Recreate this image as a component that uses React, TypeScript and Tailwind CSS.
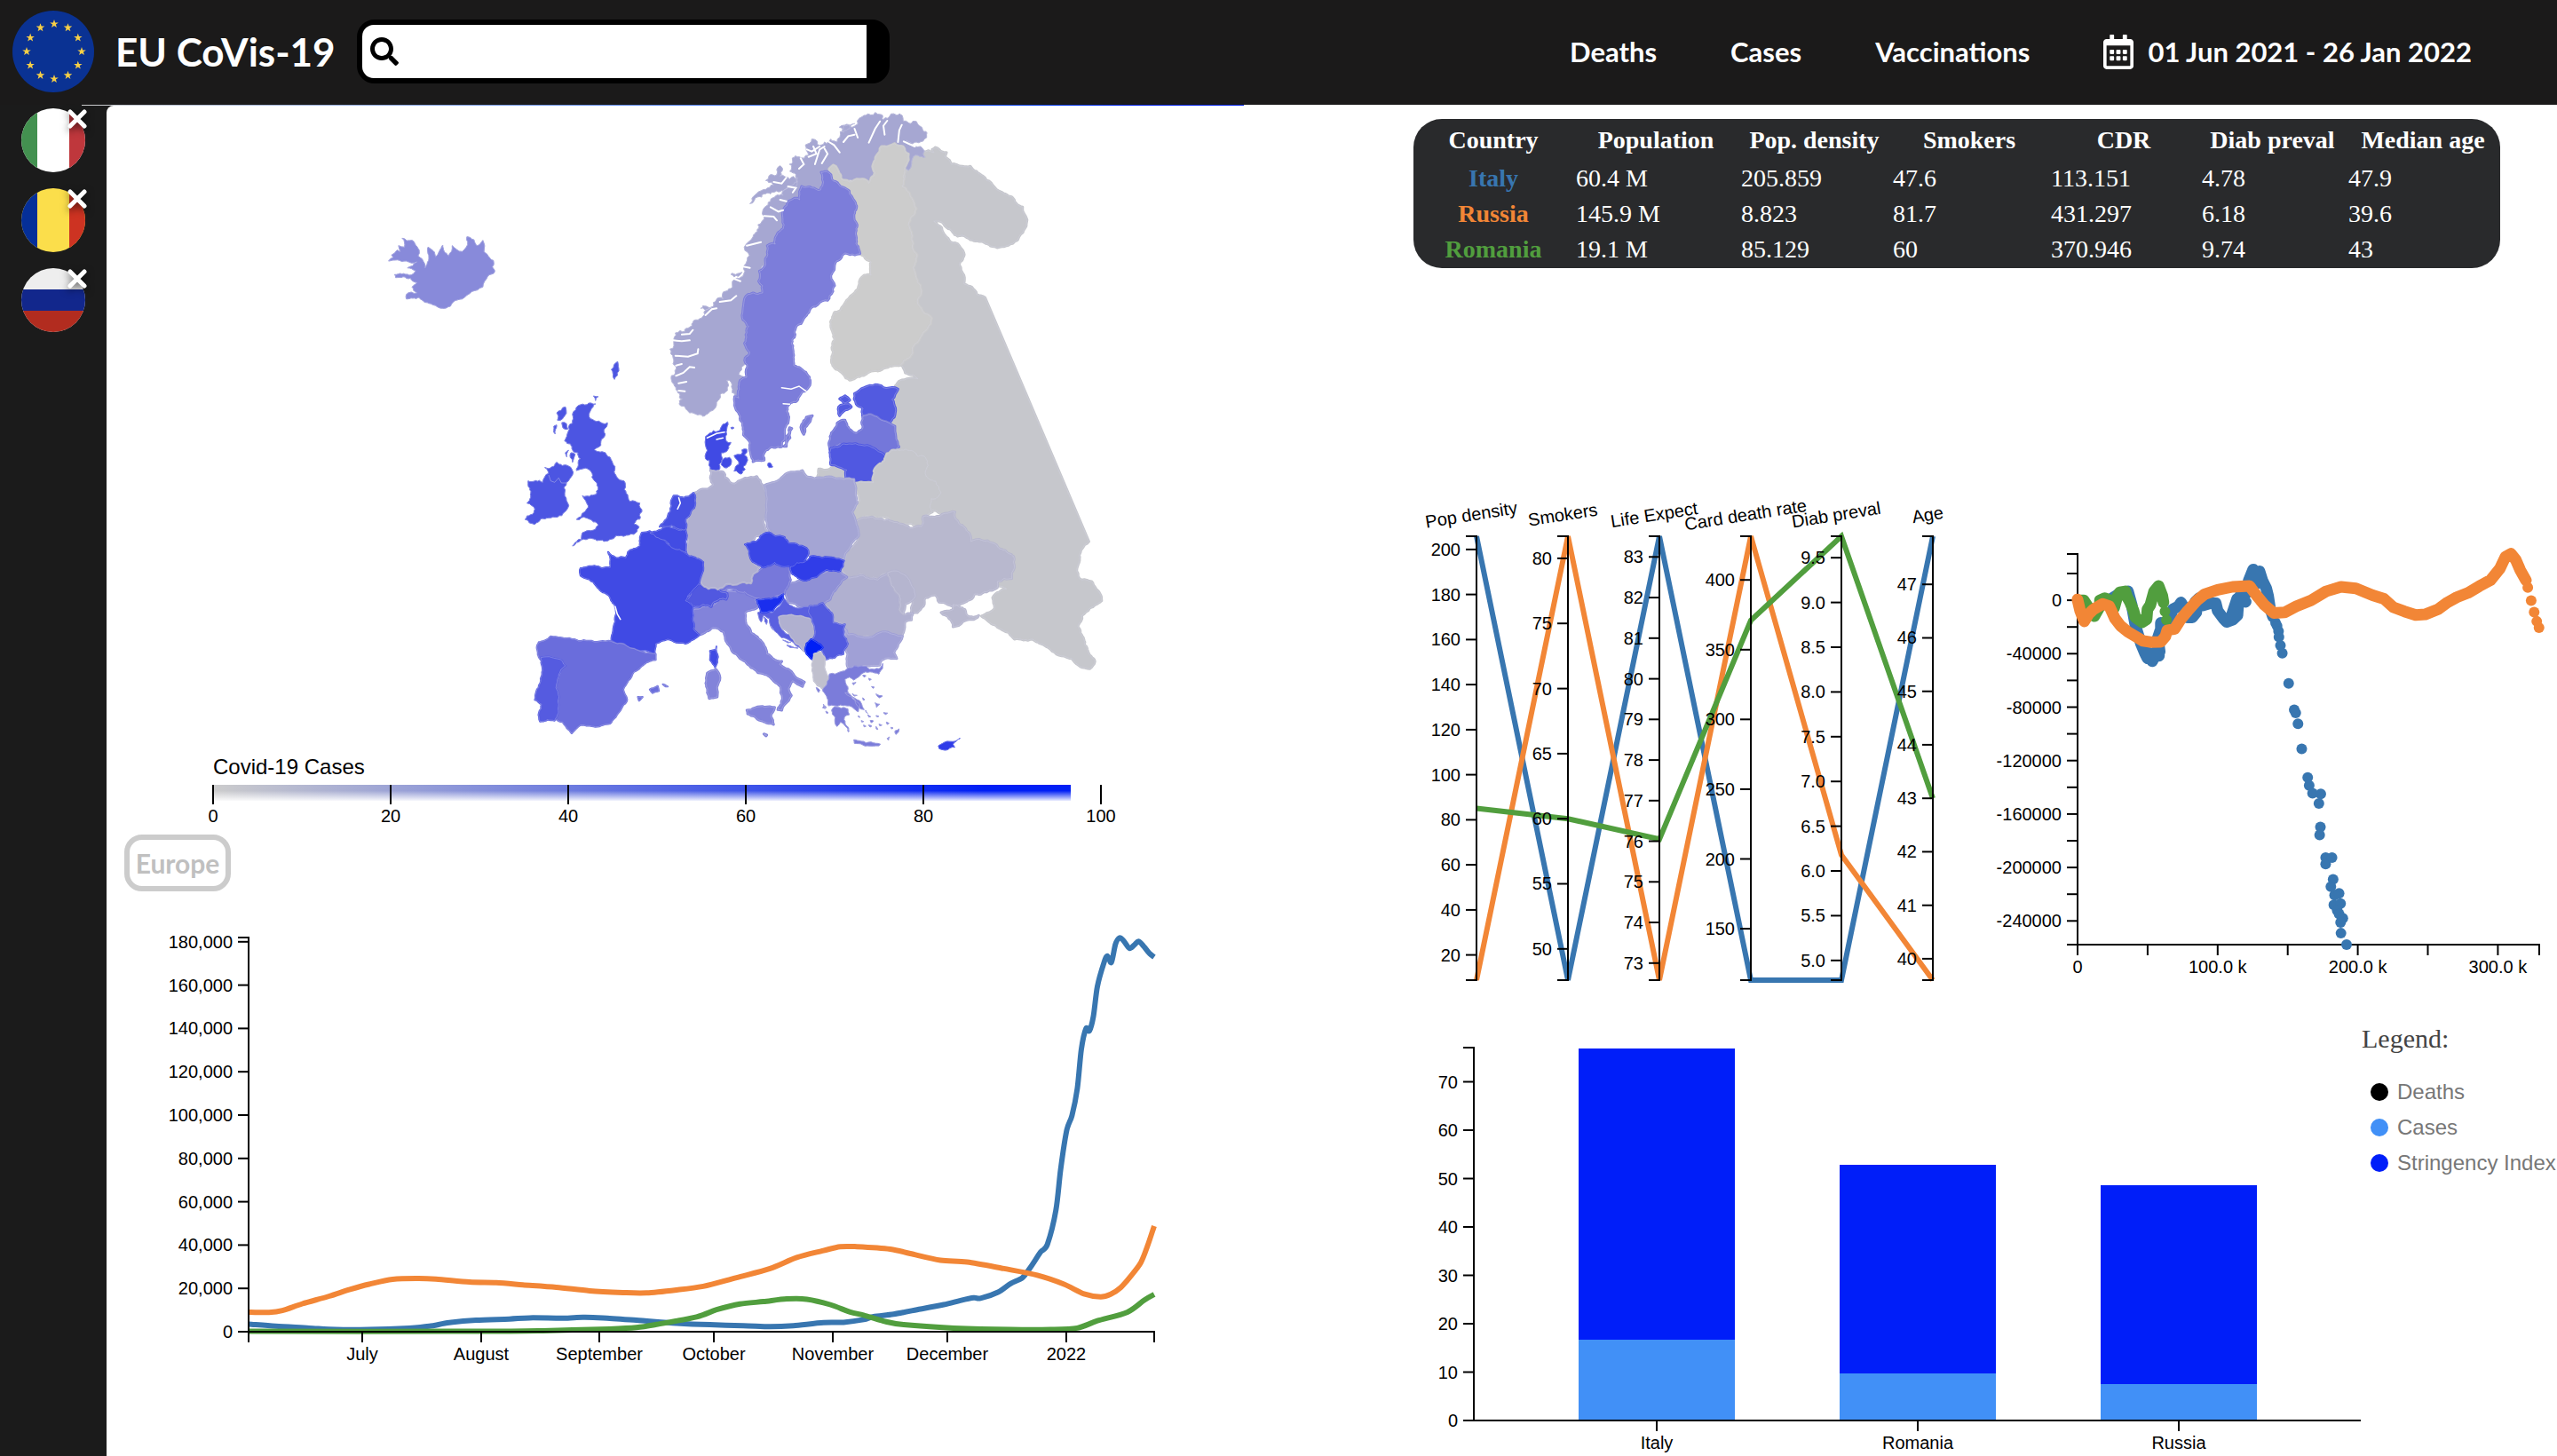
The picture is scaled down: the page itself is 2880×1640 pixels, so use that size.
import { FaRegCalendarAlt, FaSearch } from "react-icons/fa";

type Pt = [number, number];

const BLUE = "#3876b0";
const ORANGE = "#f28636";
const GREEN = "#519e3e";

/* ---------- geometry helpers ---------- */

function frame(ox: number, oy: number, kx: number, ky: number) {
  return (s: string): Pt[] =>
    s
      .trim()
      .split(/\s+/)
      .map((p) => {
        const [x, y] = p.split(",").map(Number);
        return [ox + x / kx, oy + y / ky] as Pt;
      });
}

const north = frame(700, 110, 2.8, 3);
const south = frame(560, 400, 2.24, 3);
const balkans = frame(800, 640, 3, 3);
const iceland = frame(0, 0, 1.508, 3);
const trend = frame(160, 1030, 1.329, 2.958);
const scatter = frame(2220, 590, 2.376, 2.958);

const f = (n: number) => n.toFixed(1);

function hash(a: number, b: number) {
  const v = Math.sin(a * 12.9898 + b * 78.233) * 43758.5453;
  return v - Math.floor(v) - 0.5;
}

/* Breaks an edge into small bumps so that a coast does not look ruled. */
function rough(a: Pt, b: Pt, k: number, out: Pt[]) {
  const flip = a[0] > b[0] || (a[0] === b[0] && a[1] > b[1]);
  const [p, q] = flip ? [b, a] : [a, b];
  const len = Math.hypot(q[0] - p[0], q[1] - p[1]);
  if (len < 3.5 || len > 120) {
    out.push(b);
    return;
  }
  const n = hash(p[0] + q[1], p[1] + q[0]) * k;
  const m: Pt = [(p[0] + q[0]) / 2 - (q[1] - p[1]) * n, (p[1] + q[1]) / 2 + (q[0] - p[0]) * n];
  rough(a, m, k, out);
  rough(m, b, k, out);
}

function area(pts: Pt[], k = 0.28) {
  const out: Pt[] = [pts[0]];
  pts.forEach((p, i) => rough(p, pts[(i + 1) % pts.length], k, out));
  return "M" + out.map(([x, y]) => `${f(x)} ${f(y)}`).join("L") + "Z";
}

function line(pts: Pt[]) {
  return "M" + pts.map(([x, y]) => `${f(x)} ${f(y)}`).join("L");
}

function curve(pts: Pt[]) {
  let d = `M${f(pts[0][0])} ${f(pts[0][1])}`;
  for (let i = 0; i < pts.length - 1; i++) {
    const a = pts[Math.max(0, i - 1)];
    const b = pts[i];
    const c = pts[i + 1];
    const e = pts[Math.min(pts.length - 1, i + 2)];
    d += `C${f(b[0] + (c[0] - a[0]) / 7)} ${f(b[1] + (c[1] - a[1]) / 7)} ${f(c[0] - (e[0] - b[0]) / 7)} ${f(c[1] - (e[1] - b[1]) / 7)} ${f(c[0])} ${f(c[1])}`;
  }
  return d;
}

/* ---------- map ---------- */

/* `seam` widens inland shapes so that neighbours meet without a gap. */
const regions: { fill: string; shapes: Pt[][]; k?: number; seam?: number }[] = [
  {
    fill: "#c6c7cc",
    k: 0.25,
    shapes: [
      [
        ...north(
          "950,182 985,185 980,175 990,168 1025,185 1020,200 1035,212 1040,225 1075,232 1100,232 1140,265 1190,315 1230,335 1265,370 1278,420 1270,445 1250,480 1215,500 1185,507 1145,490 1100,480 1075,465 1060,468 1045,455 1025,438 1005,418 985,418 1010,440 1020,465 1038,488 1065,500 1080,525 1065,565 1080,600 1080,630 1105,640 1120,665 1147,676",
        ),
        ...south(
          "1493,630 1475,655 1468,700 1462,730 1475,760 1500,765 1520,805 1525,830 1495,855 1475,880 1465,915 1480,960 1490,1000 1508,1035 1495,1060 1475,1055 1450,1025 1400,1000 1380,980 1350,960 1305,960 1270,925 1240,900 1222,882 1255,855 1250,820 1285,790 1240,760 1200,660 1150,560 1080,510 1000,440 985,330 985,230",
        ),
        ...north("860,985 870,965 900,950 935,950 920,937 895,930 885,905 875,905 900,840 900,650 885,400 895,265 905,210 925,185"),
      ],
      north("622,1255 650,1258 665,1245 700,1250 712,1258 708,1288 620,1287"),
    ],
  },
  {
    fill: "#a6a7d2",
    k: 0.6,
    seam: 1,
    shapes: [
      north(
        "370,1015 357,1005 350,985 340,955 332,955 334,990 300,1030 280,1060 240,1072 215,1065 182,1035 183,1000 172,980 170,930 163,880 165,820 170,795 200,790 225,760 260,725 290,705 320,680 350,640 365,610 385,575 395,520 390,500 415,470 430,430 450,400 470,350 510,330 530,300 555,285 550,260 530,225 560,200 590,195 580,160 600,140 640,150 660,140 680,150 690,115 720,95 745,90 770,60 800,50 825,75 840,70 850,55 885,60 905,85 940,95 962,125 955,140 930,150 890,148 925,165 955,180 958,200 935,195 915,215 905,245 893,245 890,215 860,180 820,180 810,255 780,300 740,290 697,290 670,250 640,300 600,330 568,340 530,400 500,450 490,510 470,640 420,700 410,880 395,1000",
      ),
      north("405,358 415,335 440,315 455,310 480,295 475,285 455,280 465,265 490,260 500,230 508,240 500,265 530,275 555,270 550,300 510,315 470,325 430,335"),
      north("687,100 715,92 735,88 720,105 700,118"),
      north("250,712 268,705 285,708 270,716"),
      north("345,597 365,595 380,590 368,604"),
    ],
  },
  {
    fill: "#cccccc",
    k: 0.3,
    shapes: [
      north(
        "862,155 905,190 905,210 893,245 888,265 885,300 915,340 930,375 905,430 915,480 932,530 920,575 930,610 945,660 933,688 978,745 965,780 920,840 875,905 820,920 770,935 720,955 700,935 670,910 665,870 672,820 660,770 672,725 690,720 710,685 735,660 765,600 787,600 787,555 765,535 752,527 720,480 715,400 718,340 680,310 655,262 655,240 668,228 680,240 697,278 725,285 760,275 780,290 800,255 805,195 820,165 840,165",
      ),
    ],
  },
  {
    fill: "#7c7dda",
    k: 0.35,
    shapes: [
      north(
        "640,250 655,255 690,300 718,315 735,350 733,395 743,430 740,480 752,527 720,530 705,525 690,545 672,565 660,605 672,635 655,670 650,685 605,705 575,745 550,775 545,810 540,850 543,905 565,915 585,935 595,955 585,985 560,1010 530,1035 520,1060 525,1100 515,1150 505,1180 465,1185 450,1200 450,1225 415,1230 405,1180 385,1140 375,1090 360,1050 357,1010 370,1015 375,955 395,945 398,910 390,880 405,860 388,830 383,720 388,680 415,660 445,660 445,635 433,620 455,560 460,500 485,495 487,470 513,430 508,395 525,355 545,340 562,345 568,300 600,305 628,312 637,285 630,252",
      ),
      north("583,1080 602,1075 590,1100 575,1138 568,1105"),
      north("530,1115 537,1118 520,1178 513,1178"),
    ],
  },
  {
    fill: "#888ada",
    k: 0.3,
    seam: 1,
    shapes: [
      iceland(
        "660,882 668,870 665,862 675,845 680,850 677,830 687,835 683,805 700,812 705,825 712,845 710,865 717,875 722,905 728,880 727,835 740,868 752,828 762,865 768,830 785,850 792,835 793,800 805,810 810,830 820,812 822,850 838,880 840,920 828,935 820,970 785,1010 770,1020 765,1035 752,1042 735,1030 712,1005 690,1010 690,995 708,990 700,970 708,955 697,940 672,938 670,928 695,930 706,915 692,905 708,885 690,882 675,878",
      ),
    ],
  },
  {
    fill: "#404ae4",
    k: 0.5,
    seam: 1,
    shapes: [
      north("265,1145 290,1125 310,1125 335,1095 330,1130 330,1160 345,1165 335,1190 315,1200 310,1255 280,1258 277,1225 265,1220"),
      north("315,1225 340,1215 345,1240 325,1250"),
      north("355,1210 378,1205 380,1190 395,1188 398,1225 385,1245 390,1255 378,1272 355,1262 370,1240"),
      north("462,1235 477,1248 465,1250"),
      north("345,1115 355,1116 348,1120"),
    ],
  },
  {
    fill: "#525ae0",
    shapes: [
      north("735,1000 765,980 800,970 872,985 853,1020 860,1080 845,1100 820,1090 785,1070 760,1075 762,1050 740,1035"),
      north("688,1018 705,1007 720,1022 705,1032"),
      north("685,1045 715,1035 725,1045 700,1060 688,1075"),
    ],
  },
  {
    fill: "#7477da",
    k: 0.25,
    shapes: [north("657,1190 658,1145 680,1100 705,1090 725,1125 740,1135 760,1120 762,1075 785,1070 820,1090 845,1100 862,1110 865,1145 875,1180 830,1210 775,1175 700,1170")],
  },
  { fill: "#5058e1", k: 0.25, shapes: [north("660,1185 700,1170 775,1175 830,1210 830,1235 800,1265 800,1295 740,1310 732,1290 708,1285 710,1258 660,1240")] },
  {
    fill: "#c6c7cc",
    k: 0.4,
    shapes: [south("900,440 950,430 955,380 980,345 1010,320 1050,325 1080,345 1080,400 1120,465 1095,485 1098,530 1075,545 1070,580 1030,570 960,550 905,565 895,530 908,510")],
  },
  {
    fill: "#b8b8ce",
    k: 0.3,
    shapes: [
      south(
        "905,565 930,550 990,560 1015,570 1070,580 1075,545 1130,535 1155,530 1165,570 1190,600 1195,630 1250,635 1303,680 1298,755 1262,765 1262,785 1235,800 1180,835 1160,845 1115,835 1105,810 1080,820 1060,870 1040,880 1050,830 1025,760 990,735 960,755 880,750 868,725 880,670 910,625",
      ),
      south("1150,842 1180,860 1185,880 1215,880 1175,900 1150,918 1140,890 1120,870 1150,860"),
    ],
  },
  {
    fill: "#b0b0d0",
    k: 0.22,
    shapes: [
      south("880,750 960,760 985,740 1010,790 1015,860 1025,878 1048,872 1045,895 1030,900 1022,950 980,935 950,950 885,945 875,910 850,900 845,870 825,840 840,825 860,780"),
    ],
  },
  { fill: "#b5b5cf", k: 0.25, shapes: [south("985,735 1010,730 1040,760 1055,815 1030,840 1025,875 1015,860 1015,810")] },
  { fill: "#a0a0d6", k: 0.2, shapes: [south("875,920 885,945 950,950 980,935 1022,950 1010,985 1000,1005 1008,1025 970,1030 965,1048 940,1050 885,1055 885,1010 875,990")] },
  { fill: "#8f90d6", k: 0.2, shapes: [south("740,770 775,760 810,740 860,725 882,750 860,780 840,825 800,850 770,855 735,835 728,800")] },
  {
    fill: "#8283da",
    k: 0.22,
    shapes: [
      south(
        "495,860 520,850 545,845 580,800 615,800 650,820 660,850 625,870 628,910 660,960 680,1010 700,1030 718,1035 712,1045 750,1085 775,1105 770,1120 745,1100 735,1125 742,1150 725,1180 718,1200 708,1198 720,1160 715,1120 680,1080 640,1055 610,1020 585,980 572,935 545,920 510,945 495,925 495,890",
      ),
      south("630,1200 650,1192 700,1190 690,1220 697,1248 665,1235 632,1212"),
      south("530,1075 552,1062 562,1090 555,1155 535,1160 528,1120"),
      south("673,1280 680,1284 678,1287"),
    ],
  },
  {
    fill: "#5a60e0",
    k: 0.2,
    seam: 1,
    shapes: [
      balkans("248,100 262,118 300,135 335,132 345,178 330,170 230,165 240,205 300,262 318,282 270,245 240,235 210,205 200,170 180,160 172,182 160,150 210,150"),
      balkans("182,165 192,175 190,190 184,180"),
      balkans("205,195 215,208 210,206"),
      balkans("245,243 272,250 262,252"),
      balkans("258,260 296,270 270,268"),
    ],
  },
  { fill: "#b0b0d0", k: 0.25, seam: 2, shapes: [balkans("232,165 290,162 345,178 348,200 355,215 350,240 325,250 320,282 290,255 245,205")] },
  { fill: "#525ae0", k: 0.25, seam: 2, shapes: [balkans("335,128 380,118 415,165 415,185 455,190 450,225 465,255 450,290 390,308 380,285 378,268 345,240 355,215 345,180")] },
  { fill: "#001ff5", k: 0.25, seam: 2, shapes: [balkans("340,240 380,268 360,282 348,310 322,280 325,255")] },
  { fill: "#c0c0ce", k: 0.25, seam: 2, shapes: [balkans("350,290 370,282 388,305 388,345 402,370 380,408 350,380")] },
  {
    fill: "#7b7cda",
    k: 0.3,
    seam: 1,
    shapes: [
      balkans(
        "402,358 440,350 465,338 510,330 570,340 583,322 582,340 570,358 540,350 510,358 500,368 485,378 470,368 455,375 460,395 465,420 480,440 505,460 500,485 470,465 440,462 400,465 395,440 380,415 402,372",
      ),
      balkans("420,468 465,475 470,495 455,500 468,545 440,520 428,535 422,505 410,480"),
      balkans("455,420 490,440 520,478 500,468"),
      balkans("485,580 510,585 575,595 570,600 530,600 487,592"),
      balkans("358,403 370,412 366,420"),
      balkans("382,460 392,470 386,474"),
      balkans("390,483 399,488 394,491"),
      balkans("385,462 380,472 390,474"),
      balkans("480,388 492,386 484,394"),
      balkans("515,362 526,364 520,368"),
      balkans("535,372 544,376 538,379"),
      balkans("560,425 582,432 572,438"),
      balkans("557,455 572,460 562,470"),
      balkans("515,438 522,444 517,446"),
      balkans("480,424 496,430 486,432"),
      balkans("545,400 554,402 550,406"),
      balkans("585,488 600,490 592,494"),
      balkans("624,550 638,543 628,562"),
      balkans("598,575 606,570 602,582"),
      balkans("525,480 532,490 526,486"),
      balkans("532,495 542,502 536,503"),
      balkans("540,515 552,517 544,522"),
      balkans("510,515 518,518 512,520"),
      balkans("518,530 526,534 520,536"),
      balkans("560,498 570,500 564,503"),
      balkans("570,527 580,530 573,533"),
      balkans("535,530 546,533 540,537"),
      balkans("560,535 566,545 561,543"),
      balkans("595,520 604,524 598,528"),
      balkans("610,538 618,540 613,543"),
      balkans("464,545 470,550 466,553"),
      balkans("500,498 506,504 501,503"),
    ],
  },
  { fill: "#2f3ce8", seam: 1, shapes: [south("1113,1320 1135,1305 1150,1306 1168,1295 1150,1315 1155,1325 1130,1335 1115,1330")] },
  { fill: "#7778da", k: 0.25, shapes: [south("560,780 630,770 645,740 690,702 738,715 740,760 725,805 690,825 650,820 625,800 565,800")] },
  { fill: "#1a2eee", seam: 2, shapes: [south("655,828 690,825 722,808 715,835 695,865 665,868")] },
  { fill: "#5158e0", shapes: [south("475,830 500,775 555,768 560,795 580,805 578,825 545,835 540,850 520,842 500,850")] },
  {
    fill: "#b0b0d0",
    k: 0.35,
    shapes: [
      south(
        "538,390 570,395 575,415 600,435 635,415 655,410 670,440 680,500 690,605 625,640 640,690 662,715 640,770 600,775 515,768 520,700 485,690 480,650 475,600 480,560 500,500 500,465 535,450 545,440 538,415",
      ),
    ],
  },
  { fill: "#a4a5d4", k: 0.2, shapes: [south("675,440 700,430 725,405 770,390 780,410 800,418 900,420 908,500 895,530 905,565 912,610 880,665 875,690 850,685 785,675 755,635 725,640 690,605 680,500")] },
  { fill: "#3a46e6", seam: 2, shapes: [south("625,640 680,600 725,615 735,635 785,660 775,695 740,715 700,700 670,718 640,690")] },
  { fill: "#303de8", seam: 2, shapes: [south("740,715 775,700 790,680 850,685 875,695 865,730 830,725 805,750 775,762 745,740")] },
  {
    fill: "#404ae4",
    k: 0.2,
    seam: 2,
    shapes: [
      south(
        "365,600 385,595 440,650 485,680 520,700 510,770 475,830 495,850 493,890 495,925 510,945 475,975 430,960 400,975 398,1010 350,995 288,965 298,900 297,845 280,810 250,780 210,745 210,720 245,712 285,718 280,665 300,685 325,685 330,665 360,645",
      ),
      south("553,985 557,1020 550,1055 537,1030 537,1000 552,995"),
    ],
  },
  { fill: "#424ce3", seam: 2, shapes: [south("385,600 430,578 475,590 475,630 478,670 440,650 400,615")] },
  { fill: "#4650e2", seam: 2, shapes: [south("445,475 462,480 495,465 500,500 475,555 475,590 440,575 410,580 430,545 440,510")] },
  {
    fill: "#6a6ddc",
    k: 0.2,
    seam: 2,
    shapes: [
      south("105,970 135,950 230,965 288,967 350,995 400,1010 400,1030 345,1070 318,1130 328,1165 305,1210 285,1245 210,1250 188,1278 165,1240 148,1230 155,1180 150,1130 170,1045 110,1030 100,990"),
      south("385,1130 405,1118 408,1135 392,1142"),
      south("418,1112 430,1120 425,1120"),
      south("355,1155 367,1155 358,1168"),
    ],
  },
  { fill: "#555be0", k: 0.25, seam: 2, shapes: [south("110,1022 165,1035 172,1050 155,1080 150,1130 155,1180 145,1235 108,1238 112,1180 95,1165 108,1110")] },
  {
    fill: "#4c55e2",
    k: 0.4,
    seam: 1,
    shapes: [
      south("78,425 115,430 130,400 120,380 150,362 180,375 190,405 175,430 178,500 170,530 130,550 95,572 70,555 95,520 75,500 85,460 78,440"),
      south(
        "205,170 248,165 235,215 278,228 268,280 245,320 275,335 290,360 295,395 320,425 330,480 335,495 360,500 365,530 345,570 358,580 350,600 300,610 265,625 230,620 190,645 215,600 255,575 200,555 220,530 230,510 215,475 250,470 250,430 235,390 200,390 210,350 190,320 185,300 170,290 190,230 190,200",
      ),
      south("150,195 172,175 165,215 152,220"),
      south("163,228 175,232 178,250 166,246"),
      south("143,240 150,236 146,266"),
      south("186,330 197,335 190,362"),
      south("172,330 180,322 176,345"),
      south("243,138 255,140 248,154"),
      south("288,48 304,22 296,82"),
    ],
  },
];

const fjords: Pt[][] = [
  north("780,152 800,105 815,80"),
  north("830,125 826,95 838,78"),
  north("872,150 876,110 884,92"),
  north("890,148 925,165"),
  north("610,225 625,175 640,165"),
  north("590,200 615,190 605,165"),
  north("632,222 650,190 640,172"),
  north("688,185 670,160 655,150"),
  north("700,150 715,130 735,125"),
  north("745,135 735,105"),
  north("560,240 575,225 565,205"),
  north("525,300 550,305 540,320"),
  north("500,345 520,350"),
  north("470,370 495,385 510,380"),
  north("450,400 480,402 490,415"),
  north("395,500 440,488"),
  north("380,570 405,575"),
  north("350,610 375,620"),
  north("310,690 345,685 362,670"),
  north("265,735 285,715 300,712"),
  north("190,800 215,798 225,785"),
  north("163,820 190,823 215,820"),
  north("170,872 210,875 240,865 242,850"),
  north("172,905 190,900"),
  north("172,940 195,930 215,910 230,912"),
  north("180,965 205,960"),
  north("180,990 200,992"),
  north("585,175 600,182 625,165"),
  north("480,285 505,290 520,270"),
];

const inlets: Pt[][] = [north("505,980 535,985 560,975 582,992"), north("510,1034 530,1036"), north("270,1150 300,1135 325,1130"), north("300,1155 320,1150"), south("298,850 303,875 311,893"), south("455,520 462,500 458,482")];

function EuropeMap() {
  return (
    <svg viewBox="120 119 1440 821" className="block h-auto w-full" role="img" aria-label="Covid-19 cases in Europe">
      <defs>
        <linearGradient id="scale">
          <stop offset="0" stopColor="#cccccc" />
          <stop offset="0.9" stopColor="#001ff5" />
        </linearGradient>
        <linearGradient id="fade" x2="0" y2="1">
          <stop offset="0.35" stopColor="#fff" stopOpacity="0" />
          <stop offset="1" stopColor="#fff" />
        </linearGradient>
      </defs>
      <g strokeLinejoin="round">
        {regions.map((r, i) => {
          const d = r.shapes.map((s) => area(s, r.k)).join("");
          return (
            <g key={i}>
              <path fill={r.fill} stroke={r.fill} strokeWidth={r.seam ?? 3} d={d} />
              <path fill="none" stroke="#d8d8ea" strokeOpacity="0.3" d={d} />
            </g>
          );
        })}
        <path fill="none" stroke="#d8d8ea" strokeOpacity="0.4" d={line(south("130,405 135,425 145,430 155,415 162,432 175,432"))} />
      </g>
      <path fill="none" stroke="#fff" strokeWidth="2" strokeLinecap="round" d={fjords.map(line).join("")} />
      <path fill="none" stroke="#fff" strokeWidth="1.5" strokeLinecap="round" d={inlets.map(line).join("")} />
      <g className="font-['Liberation_Sans',sans-serif] text-[20px]" textAnchor="middle">
        <text x="240" y="872" textAnchor="start" className="text-[24px]">
          Covid-19 Cases
        </text>
        <rect x="240" y="884" width="966" height="18" fill="url(#scale)" />
        <rect x="240" y="884" width="966" height="19" fill="url(#fade)" />
        {[0, 20, 40, 60, 80, 100].map((v) => (
          <g key={v}>
            <path d={`M${240 + v * 10} 884v22`} stroke="#000" strokeWidth="2" />
            <text x={240 + v * 10} y="926">
              {v}
            </text>
          </g>
        ))}
      </g>
    </svg>
  );
}

/* ---------- trend lines ---------- */

const series = {
  blue: "160,1365 200,1372 250,1378 290,1383 340,1383 400,1378 430,1372 460,1360 500,1352 550,1348 580,1344 630,1345 660,1342 690,1344 740,1352 800,1362 850,1367 900,1370 940,1373 975,1370 1020,1360 1050,1359 1080,1350 1095,1340 1125,1332 1160,1317 1200,1300 1225,1286 1245,1277 1255,1279 1282,1258 1300,1230 1318,1210 1330,1175 1345,1125 1355,1100 1368,985 1375,850 1384,720 1392,670 1400,580 1406,450 1413,380 1418,388 1424,340 1430,240 1440,160 1445,138 1451,160 1457,100 1463,78 1469,87 1478,113 1486,100 1492,90 1500,108 1508,130 1515,142",
  orange:
    "160,1325 190,1326 210,1320 240,1297 280,1272 310,1250 340,1232 375,1216 410,1213 440,1215 490,1225 530,1227 570,1234 620,1242 670,1254 720,1260 755,1261 800,1251 840,1239 890,1210 940,1180 980,1143 1020,1120 1045,1107 1070,1107 1120,1115 1150,1130 1195,1152 1235,1158 1290,1180 1340,1202 1380,1232 1410,1264 1435,1274 1450,1265 1465,1243 1480,1205 1495,1160 1505,1105 1515,1038",
  green:
    "160,1389 500,1389 600,1387 700,1381 740,1376 770,1366 830,1341 860,1317 895,1298 930,1290 965,1281 995,1282 1030,1300 1060,1325 1080,1335 1110,1355 1140,1367 1215,1378 1300,1383 1360,1383 1400,1378 1430,1354 1475,1325 1500,1285 1515,1266",
};

const months: [string, number][] = [
  ["July", 408],
  ["August", 542],
  ["September", 675],
  ["October", 804],
  ["November", 938],
  ["December", 1067],
  ["2022", 1201],
];

function TrendChart() {
  return (
    <svg viewBox="120 1004 1440 636" className="block h-auto w-full font-['Liberation_Sans',sans-serif] text-[20px]" role="img" aria-label="Cases over time">
      <g fill="none" strokeWidth="6" strokeLinejoin="round">
        <path stroke={BLUE} d={curve(trend(series.blue))} />
        <path stroke={ORANGE} d={curve(trend(series.orange))} />
        <path stroke={GREEN} d={curve(trend(series.green))} />
      </g>
      <path fill="none" stroke="#000" strokeWidth="2" d="M268 1056H280V1500H268M280 1512V1500H1300V1512" />
      {Array.from({ length: 10 }, (_, i) => {
        const y = 1500 - i * 48.8;
        return (
          <g key={i}>
            <path d={`M268 ${y}h12`} stroke="#000" strokeWidth="2" />
            <text x="262" y={y + 7} textAnchor="end">
              {(i * 20000).toLocaleString("en-US")}
            </text>
          </g>
        );
      })}
      {months.map(([m, x]) => (
        <g key={m}>
          <path d={`M${x} 1500v12`} stroke="#000" strokeWidth="2" />
          <text x={x} y="1532" textAnchor="middle">
            {m}
          </text>
        </g>
      ))}
    </svg>
  );
}

/* ---------- parallel coordinates ---------- */

const axes = [
  { name: "Pop density", x: 1663, min: 8.823, max: 205.859, from: 20, to: 200, step: 20, digits: 0 },
  { name: "Smokers", x: 1766, min: 47.6, max: 81.7, from: 50, to: 80, step: 5, digits: 0 },
  { name: "Life Expect", x: 1869, min: 72.58, max: 83.51, from: 73, to: 83, step: 1, digits: 0 },
  { name: "Card death rate", x: 1972, min: 113.151, max: 431.297, from: 150, to: 400, step: 50, digits: 0 },
  { name: "Diab preval", x: 2074, min: 4.78, max: 9.74, from: 5, to: 9.5, step: 0.5, digits: 1 },
  { name: "Age", x: 2177, min: 39.6, max: 47.9, from: 40, to: 47, step: 1, digits: 0 },
];

const profiles = [
  { color: BLUE, values: [205.859, 47.6, 83.51, 113.151, 4.78, 47.9] },
  { color: ORANGE, values: [8.823, 81.7, 72.58, 431.297, 6.18, 39.6] },
  { color: GREEN, values: [85.129, 60, 76.05, 370.946, 9.74, 43] },
];

const py = (i: number, v: number) => 1104 - (500 * (v - axes[i].min)) / (axes[i].max - axes[i].min);

function ParallelChart() {
  return (
    <svg viewBox="1560 540 660 580" className="block h-auto w-full font-['Liberation_Sans',sans-serif] text-[20px]" role="img" aria-label="Country indicators">
      <g fill="none" strokeWidth="6">
        {profiles.map((p) => (
          <path key={p.color} stroke={p.color} d={line(p.values.map((v, i) => [axes[i].x, py(i, v)] as Pt))} />
        ))}
      </g>
      {axes.map((a, i) => {
        const count = Math.round((a.to - a.from) / a.step) + 1;
        return (
          <g key={a.name}>
            <path fill="none" stroke="#000" strokeWidth="2" d={`M${a.x - 12} 604h12v500h-12`} />
            {Array.from({ length: count }, (_, n) => {
              const v = a.from + n * a.step;
              const y = py(i, v);
              return (
                <g key={n}>
                  <path d={`M${a.x - 12} ${f(y)}h12`} stroke="#000" strokeWidth="2" />
                  <text x={a.x - 18} y={y + 7} textAnchor="end">
                    {v.toFixed(a.digits)}
                  </text>
                </g>
              );
            })}
            <text transform={`translate(${a.x} 604) rotate(-9)`} x="-2" y="-18" textAnchor="middle">
              {a.name}
            </text>
          </g>
        );
      })}
    </svg>
  );
}

/* ---------- scatter ---------- */

const trails = {
  blue: scatter(
    "375,250 395,235 420,225 430,270 440,340 455,400 465,430 472,448 478,430 485,458 492,440 503,440 500,410 505,425 500,380 508,350 508,330 515,345 530,320 540,285 555,275 562,262 575,290 580,312 592,312 603,295 600,260 610,248 620,272 640,265 655,265 660,290 675,315 684,327 700,320 713,305 715,270 705,285 695,315 712,250 735,260 720,240 745,225 743,190 755,152 762,200 770,195 772,158 780,190 790,215 795,240 800,280 808,310",
  ),
  green: scatter("290,255 302,255 315,280 330,308 345,275 345,255 358,248 372,255 383,280 392,240 398,228 413,225 418,245 425,260 435,290 440,312 458,328 470,318 472,285 480,270 490,225 502,207 512,240 515,262"),
  orange: scatter(
    "285,252 292,290 303,325 315,300 328,285 352,267 370,274 385,315 400,340 420,360 440,375 460,390 480,394 508,393 520,375 525,355 545,350 560,320 580,290 605,255 625,235 660,220 700,210 745,207 765,240 785,270 810,297 840,295 870,275 910,255 950,225 990,210 1030,215 1075,238 1105,250 1130,278 1160,292 1190,304 1215,302 1250,285 1275,262 1300,245 1330,230 1360,208 1390,188 1415,150 1430,110 1445,100 1458,120 1470,155 1485,188",
  ),
};

const dots = {
  blue: scatter(
    "815,330 819,340 823,358 824,377 828,405 833,431 850,532 865,620 869,630 875,666 885,750 901,845 905,872 914,898 936,900 931,932 935,1010 933,1037 949,1112 949,1134 966,1112 969,1185 963,1209 973,1237 985,1231 971,1270 989,1265 980,1288 985,1300 995,1314 989,1328 990,1364 1005,1402",
  ),
  green: scatter("519,292 523,320"),
  orange: scatter("1490,212 1499,256 1507,294 1514,325 1520,346"),
};

const layers: { color: string; trail: Pt[]; dots: Pt[] }[] = [
  { color: BLUE, trail: trails.blue, dots: dots.blue },
  { color: GREEN, trail: trails.green, dots: dots.green },
  { color: ORANGE, trail: trails.orange, dots: dots.orange },
];

function ScatterChart() {
  return (
    <svg viewBox="2220 540 660 580" className="block h-auto w-full font-['Liberation_Sans',sans-serif] text-[20px]" role="img" aria-label="Projection of cases">
      <path fill="none" stroke="#000" strokeWidth="2" d="M2328 624H2340V1064H2328M2340 1076V1064H2860V1076" />
      {Array.from({ length: 14 }, (_, i) => {
        const y = 646 + i * 30.1;
        return (
          <g key={i}>
            <path d={`M2328 ${f(y)}h12`} stroke="#000" strokeWidth="2" />
            {i % 2 === 1 && (
              <text x="2322" y={y + 7} textAnchor="end">
                {20000 - i * 20000}
              </text>
            )}
          </g>
        );
      })}
      {Array.from({ length: 7 }, (_, i) => {
        const x = 2340 + i * 78.9;
        return (
          <g key={i}>
            <path d={`M${f(x)} 1064v12`} stroke="#000" strokeWidth="2" />
            {i % 2 === 0 && (
              <text x={x} y="1096" textAnchor="middle">
                {i === 0 ? "0" : `${i * 50}.0 k`}
              </text>
            )}
          </g>
        );
      })}
      {layers.map((l) => (
        <g key={l.color}>
          <path fill="none" stroke={l.color} strokeWidth="13" strokeLinecap="round" strokeLinejoin="round" d={line(l.trail)} />
          {l.dots.map(([x, y], i) => (
            <circle key={i} cx={x} cy={y} r="6" fill={l.color} />
          ))}
        </g>
      ))}
    </svg>
  );
}

/* ---------- stacked bars ---------- */

const bars = [
  { name: "Italy", x: 1866, top: 1181, split: 1509 },
  { name: "Romania", x: 2160, top: 1312, split: 1547 },
  { name: "Russia", x: 2454, top: 1335, split: 1559 },
];

const legend = [
  { name: "Deaths", y: 1230, color: "#000000" },
  { name: "Cases", y: 1270, color: "#4190f7" },
  { name: "Stringency Index", y: 1310, color: "#001ef9" },
];

function BarChart() {
  return (
    <svg viewBox="1560 1120 1320 520" className="block h-auto w-full font-['Liberation_Sans',sans-serif] text-[20px]" role="img" aria-label="Stringency index by country">
      {bars.map((b) => (
        <g key={b.name}>
          <rect x={b.x - 88} y={b.top} width="176" height={b.split - b.top} fill="#001ef9" />
          <rect x={b.x - 88} y={b.split} width="176" height={1600 - b.split} fill="#4190f7" />
          <path d={`M${b.x} 1600v12`} stroke="#000" strokeWidth="2" />
          <text x={b.x} y="1632" textAnchor="middle">
            {b.name}
          </text>
        </g>
      ))}
      <path fill="none" stroke="#000" strokeWidth="2" d="M1648 1180H1660V1600H1648M1660 1600H2659" />
      {Array.from({ length: 8 }, (_, i) => {
        const y = 1600 - i * 54.5;
        return (
          <g key={i}>
            <path d={`M1648 ${y}h12`} stroke="#000" strokeWidth="2" />
            <text x="1642" y={y + 7} textAnchor="end">
              {i * 10}
            </text>
          </g>
        );
      })}
      <text x="2660" y="1180" fill="#444" className="font-['Liberation_Serif',serif] text-[30px]">
        Legend:
      </text>
      {legend.map((l) => (
        <g key={l.name}>
          <circle cx="2680" cy={l.y} r="10" fill={l.color} />
          <text x="2700" y={l.y + 8} fill="#777" className="text-[24px]">
            {l.name}
          </text>
        </g>
      ))}
    </svg>
  );
}

/* ---------- chrome ---------- */

function star(cx: number, cy: number, r: number) {
  return (
    "M" +
    Array.from({ length: 10 }, (_, i) => {
      const a = (Math.PI * i) / 5 - Math.PI / 2;
      const q = i % 2 ? r * 0.4 : r;
      return `${f(cx + q * Math.cos(a))} ${f(cy + q * Math.sin(a))}`;
    }).join("L") +
    "Z"
  );
}

function Logo() {
  return (
    <svg viewBox="0 0 92 92" className="size-[92px] shrink-0" role="img" aria-label="European Union">
      <circle cx="46" cy="46" r="46" fill="#0a3293" />
      {Array.from({ length: 12 }, (_, i) => (
        <path key={i} fill="#f7cf46" d={star(47 + 31 * Math.sin((i * Math.PI) / 6), 46 - 31 * Math.cos((i * Math.PI) / 6), 5)} />
      ))}
    </svg>
  );
}

function Flag({ name, bands }: { name: string; bands: React.ReactNode }) {
  return (
    <div className="relative size-[72px]">
      <svg viewBox="0 0 72 72" className="size-full rounded-full" role="img" aria-label={name}>
        {bands}
      </svg>
      <button type="button" aria-label={`Remove ${name}`} className="absolute top-px -right-0.5 size-[22px] cursor-pointer drop-shadow-[0_3px_4px_rgba(0,0,0,0.6)]">
        <svg viewBox="0 0 22 22" className="size-full" fill="none" stroke="#fff" strokeWidth="5" strokeLinecap="round">
          <path d="M3 3l16 16M19 3L3 19" />
        </svg>
      </button>
    </div>
  );
}

const columns = ["Country", "Population", "Pop. density", "Smokers", "CDR", "Diab preval", "Median age"];

const rows = [
  { name: "Italy", tone: "text-[#3876b0]", cells: ["60.4 M", "205.859", "47.6", "113.151", "4.78", "47.9"] },
  { name: "Russia", tone: "text-[#f28636]", cells: ["145.9 M", "8.823", "81.7", "431.297", "6.18", "39.6"] },
  { name: "Romania", tone: "text-[#519e3e]", cells: ["19.1 M", "85.129", "60", "370.946", "9.74", "43"] },
];

function StatsTable() {
  return (
    <div className="mt-[15px] mr-16 ml-8 overflow-hidden rounded-[32px] bg-[#292a2c] pb-px font-['Liberation_Serif',serif] text-[28px] leading-[40px] text-white">
      <table className="w-full table-fixed border-collapse">
        <colgroup>
          <col className="w-[180px]" />
          <col className="w-[186px]" />
          <col className="w-[171px]" />
          <col className="w-[178px]" />
          <col className="w-[170px]" />
          <col className="w-[165px]" />
          <col className="w-[174px]" />
        </colgroup>
        <thead>
          <tr className="h-[47px]">
            {columns.map((c) => (
              <th key={c} scope="col" className="p-0 text-center font-bold whitespace-nowrap">
                {c}
              </th>
            ))}
          </tr>
        </thead>
        <tbody>
          {rows.map((r) => (
            <tr key={r.name}>
              <th scope="row" className={`p-0 text-center font-bold ${r.tone}`}>
                {r.name}
              </th>
              {r.cells.map((c, i) => (
                <td key={i} className="p-0 pl-[3px]">
                  {c}
                </td>
              ))}
            </tr>
          ))}
        </tbody>
      </table>
    </div>
  );
}

export default function App() {
  return (
    <div className="min-h-screen bg-[#1b1b1b] font-['Lato',sans-serif]">
      <header className="flex h-[118px] items-start bg-[#1b1a1a] pr-24 pl-3.5 text-white">
        <div className="flex h-[116px] w-full items-center">
          <Logo />
          <h1 className="ml-6 w-[272px] shrink-0 text-[44px] leading-none font-bold whitespace-nowrap">EU CoVis-19</h1>
          <form className="flex h-[72px] w-[600px] shrink-0 items-stretch rounded-[20px] border-6 border-black bg-black" role="search">
            <label className="flex w-[568px] items-center rounded-l-[13px] bg-white pl-[9px] text-black">
              <FaSearch className="size-8 shrink-0" aria-hidden />
              <input type="search" aria-label="Search country" className="h-full min-w-0 flex-1 bg-transparent px-3 text-[30px] outline-none" />
            </label>
          </form>
          <nav className="ml-auto flex items-center gap-[83px] text-[31px] leading-none font-bold whitespace-nowrap">
            <a href="#deaths">Deaths</a>
            <a href="#cases">Cases</a>
            <a href="#vaccinations">Vaccinations</a>
            <button type="button" className="flex cursor-pointer items-center gap-4">
              <FaRegCalendarAlt className="h-[39px] w-[34px]" aria-hidden />
              01 Jun 2021 - 26 Jan 2022
            </button>
          </nav>
        </div>
      </header>
      <div className="flex h-px bg-white">
        <div className="w-[92px] shrink-0 bg-[#1b1b1b]" />
        <div className="w-5/11 bg-linear-to-r from-[#cccccc] to-[#001ff5] to-90%" />
      </div>
      <div className="flex">
        <aside className="flex w-[120px] shrink-0 flex-col items-center gap-[18px] pt-[3px]">
          <Flag
            name="Italy"
            bands={
              <>
                <rect width="72" height="72" fill="#fff" />
                <rect width="18" height="72" fill="#439150" />
                <rect x="54" width="18" height="72" fill="#bf373c" />
              </>
            }
          />
          <Flag
            name="Romania"
            bands={
              <>
                <rect width="72" height="72" fill="#fbde4b" />
                <rect width="18" height="72" fill="#052f98" />
                <rect x="54" width="18" height="72" fill="#cd3322" />
              </>
            }
          />
          <Flag
            name="Russia"
            bands={
              <>
                <rect width="72" height="72" fill="#eeeeee" />
                <rect y="24" width="72" height="24" fill="#12278c" />
                <rect y="48" width="72" height="24" fill="#b22c1f" />
              </>
            }
          />
        </aside>
        <main className="grid min-w-0 flex-1 grid-cols-[12fr_11fr] rounded-tl-lg bg-white text-black">
          <section className="min-w-0">
            <EuropeMap />
            <button type="button" className="ml-5 block h-16 w-[120px] cursor-pointer rounded-[20px] border-6 border-[#cccccc] text-center text-[30px] leading-none font-bold text-[#c0c0c0]">
              Europe
            </button>
            <TrendChart />
          </section>
          <section className="min-w-0">
            <StatsTable />
            <div className="mt-[238px] grid grid-cols-2">
              <ParallelChart />
              <ScatterChart />
            </div>
            <BarChart />
          </section>
        </main>
      </div>
    </div>
  );
}
